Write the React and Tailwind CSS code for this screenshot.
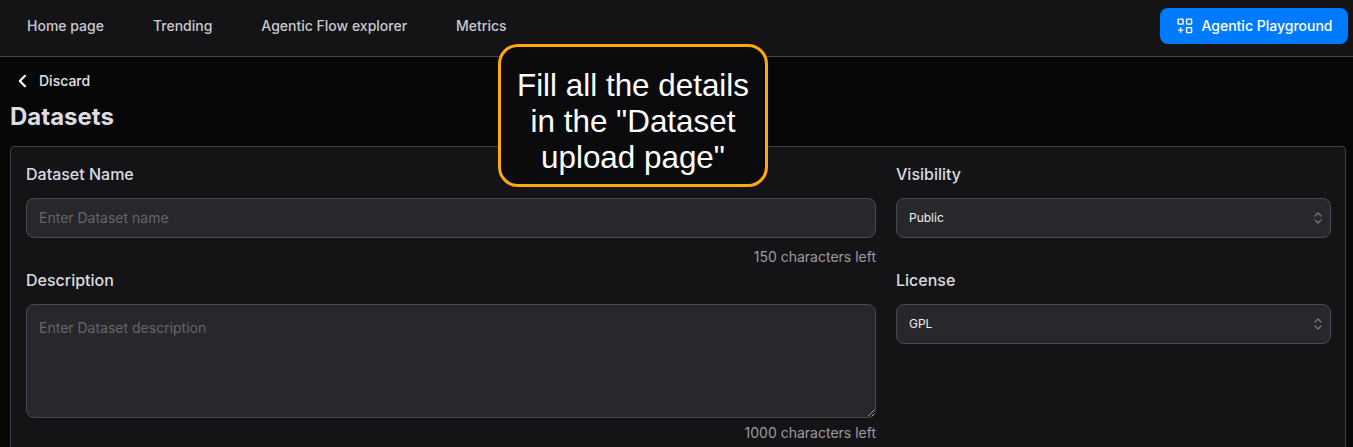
import React from "react";

const font = { fontFamily: "Inter, sans-serif" };

function PlayIcon() {
  return (
    <svg className="ml-[2px]" width="16" height="16" viewBox="0 0 16 16" fill="none" stroke="white" strokeWidth="1.4">
      <rect x="1.1" y="1.1" width="5" height="5" rx="0.6" />
      <rect x="9.6" y="1.1" width="5" height="5" rx="0.6" />
      <rect x="9.6" y="9.6" width="5" height="5" rx="0.6" />
      <path d="M3.6 9.4v5.4M0.9 12.1h5.4" />
    </svg>
  );
}

function Chevrons() {
  return (
    <svg className="pointer-events-none absolute right-[7px] top-1/2 -translate-y-1/2" width="12" height="14" viewBox="0 0 12 14" fill="none" stroke="#75757c" strokeWidth="1.4" strokeLinecap="round" strokeLinejoin="round">
      <path d="M3 5l3-3 3 3M3 9l3 3 3-3" />
    </svg>
  );
}

function SelectBox({ value }) {
  return (
    <div className="relative">
      <select defaultValue={value} className="h-10 w-full appearance-none rounded-lg border border-[#4a4a52] bg-[#27272c] px-3 text-xs text-[#f0f0f2] outline-none">
        <option>{value}</option>
      </select>
      <Chevrons />
    </div>
  );
}

export default function App() {
  return (
    <div className="relative h-[447px] overflow-hidden bg-[#070708]" style={font}>
      <nav className="flex h-[57px] items-start justify-between border-b border-[#44444a] bg-[#141417] pl-[27px] pr-[5px] pt-2">
        <div className="flex h-9 items-center gap-[49px] text-sm font-medium text-[#c9c9ce]">
          <a>Home page</a>
          <a>Trending</a>
          <a>Agentic Flow explorer</a>
          <a>Metrics</a>
        </div>
        <button className="flex h-9 w-[188px] items-center justify-center gap-[8px] rounded-lg bg-[#007aff] text-sm font-medium text-white">
          <PlayIcon />
          Agentic Playground
        </button>
      </nav>

      <main className="px-[10px]">
        <div className="flex h-[48px] items-center gap-[11px] pl-[6px] text-sm font-medium text-[#e4e4e7]">
          <svg width="12" height="14" viewBox="0 0 12 14" fill="none" stroke="#ffffff" strokeWidth="2.2" strokeLinecap="round" strokeLinejoin="round">
            <path d="M9 1.8L3.8 7 9 12.2" />
          </svg>
          Discard
        </div>
        <h1 className="text-2xl leading-[24px] font-bold text-[#dcdce0]">Datasets</h1>

        <section className="mt-[17px] mr-[-3px] grid h-[400px] grid-cols-[850px_435px] gap-x-5 rounded-t border border-[#3f3f46] bg-[#141417] px-[15px] pt-[17px] content-start">
          <div>
            <label className="block text-base leading-5 font-[550] text-[#dcdce0]">Dataset Name</label>
            <input placeholder="Enter Dataset name" className="mt-[14px] h-10 w-full rounded-lg border border-[#4a4a52] bg-[#27272c] px-3 pb-[1px] text-sm text-white outline-none placeholder:text-[#66666d]" />
            <p className="mt-[10px] text-right text-sm leading-[18px] font-normal text-[#9c9ca3]">150 characters left</p>
          </div>
          <div>
            <label className="block text-base leading-5 font-[550] text-[#dcdce0]">Visibility</label>
            <div className="mt-[14px]">
              <SelectBox value="Public" />
            </div>
          </div>

          <div className="mt-[4px]">
            <label className="block text-base leading-5 font-[550] text-[#dcdce0]">Description</label>
            <textarea placeholder="Enter Dataset description" className="mt-[14px] block h-[114px] w-full rounded-lg border border-[#4a4a52] bg-[#27272c] px-3 py-[13px] text-sm leading-[20px] text-white outline-none [color-scheme:dark] placeholder:text-[#66666d]" />
            <p className="mt-[6px] text-right text-sm leading-[18px] font-normal text-[#9c9ca3]">1000 characters left</p>
          </div>
          <div className="mt-[4px]">
            <label className="block text-base leading-5 font-[550] text-[#dcdce0]">License</label>
            <div className="mt-[14px]">
              <SelectBox value="GPL" />
            </div>
          </div>
        </section>
      </main>

      <div
        className="absolute left-[498px] top-[44px] flex h-[143px] w-[270px] items-center justify-center rounded-[20px] border-[3px] border-[#ffa90a] bg-[#0b0b0d] pt-3 text-center text-[31.4px] leading-[36px] text-white"
        style={{ fontFamily: '"Liberation Sans", Arial, sans-serif' }}
      >
        <span>
          Fill all the details
          <br />
          in the "Dataset
          <br />
          upload page"
        </span>
      </div>
    </div>
  );
}
